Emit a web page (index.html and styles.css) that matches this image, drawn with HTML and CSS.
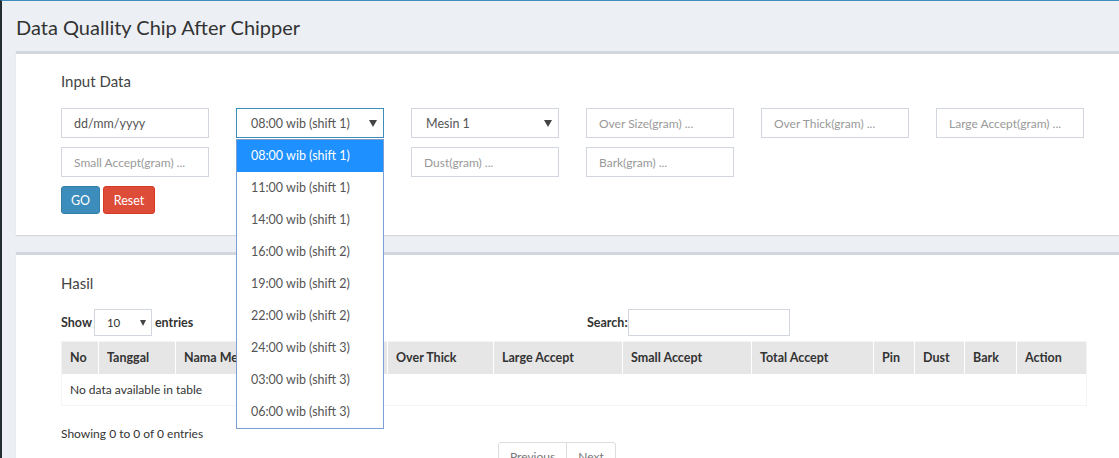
FILE: index.html
```html
<!DOCTYPE html>
<html>
<head>
<meta charset="utf-8">
<link rel="stylesheet" href="styles.css">
</head>
<body>
<div class="wrapper">
  <div class="content-header">
    <h1>Data Quallity Chip After Chipper</h1>
  </div>

  <div class="box box-input">
    <h3 class="box-title">Input Data</h3>
    <div class="form-grid">
      <div class="field"><div class="input text">dd/mm/yyyy</div></div>
      <div class="field dd-anchor">
        <div class="input select focused"><span>08:00 wib (shift 1)</span><span class="arrow"></span></div>
        <ul class="dropdown">
          <li class="active">08:00 wib (shift 1)</li>
          <li>11:00 wib (shift 1)</li>
          <li>14:00 wib (shift 1)</li>
          <li>16:00 wib (shift 2)</li>
          <li>19:00 wib (shift 2)</li>
          <li>22:00 wib (shift 2)</li>
          <li>24:00 wib (shift 3)</li>
          <li>03:00 wib (shift 3)</li>
          <li>06:00 wib (shift 3)</li>
        </ul>
      </div>
      <div class="field"><div class="input select"><span>Mesin 1</span><span class="arrow"></span></div></div>
      <div class="field"><div class="input ph">Over Size(gram) ...</div></div>
      <div class="field"><div class="input ph">Over Thick(gram) ...</div></div>
      <div class="field"><div class="input ph">Large Accept(gram) ...</div></div>
      <div class="field"><div class="input ph">Small Accept(gram) ...</div></div>
      <div class="field"><div class="input ph">Pin(gram) ...</div></div>
      <div class="field"><div class="input ph">Dust(gram) ...</div></div>
      <div class="field"><div class="input ph">Bark(gram) ...</div></div>
    </div>
    <div class="buttons">
      <button class="btn btn-primary">GO</button>
      <button class="btn btn-danger">Reset</button>
    </div>
  </div>

  <div class="box box-result">
    <h3 class="box-title">Hasil</h3>
    <div class="dt-top">
      <div class="dt-length">
        <span class="lbl">Show</span>
        <div class="small-select"><span>10</span><span class="arrow"></span></div>
        <span class="lbl">entries</span>
      </div>
      <div class="dt-search">
        <span class="lbl">Search:</span>
        <div class="search-input"></div>
      </div>
    </div>
    <table class="dt">
      <thead>
        <tr>
          <th class="c-no">No</th>
          <th class="c-tgl">Tanggal</th>
          <th class="c-nama">Nama Mesin</th>
          <th class="c-os">Over Size</th>
          <th class="c-ot">Over Thick</th>
          <th class="c-la">Large Accept</th>
          <th class="c-sa">Small Accept</th>
          <th class="c-ta">Total Accept</th>
          <th class="c-pin">Pin</th>
          <th class="c-dust">Dust</th>
          <th class="c-bark">Bark</th>
          <th class="c-act">Action</th>
        </tr>
      </thead>
      <tbody>
        <tr><td colspan="12">No data available in table</td></tr>
      </tbody>
    </table>
    <div class="dt-info">Showing 0 to 0 of 0 entries</div>
    <div class="pager">
      <span class="pg">Previous</span><span class="pg">Next</span>
    </div>
  </div>
</div>
</body>
</html>
```

FILE: styles.css
```css
* { box-sizing: border-box; }
html, body { margin: 0; padding: 0; }
body {
  background: #ecf0f5;
  font-family: "Lato", "Liberation Sans", sans-serif;
  font-size: 12px;
  color: #333;
  overflow: hidden;
  height: 458px;
}
.wrapper {
  border-left: 2px solid #222d32;
  border-top: 1px solid #3c8dbc;
  min-height: 458px;
}
.content-header { padding: 14px 14px 0 14px; height: 50px; }
.content-header h1 {
  margin: 0;
  font-size: 20px;
  font-weight: 400;
  color: #333;
  line-height: 24px;
}
.box {
  background: #fff;
  border-top: 3px solid #d2d6de;
  margin-left: 14px;
  box-shadow: 0 1px 1px rgba(0,0,0,0.1);
  padding: 0 0 0 45px;
  position: relative;
}
.box-input { height: 184px; padding-top: 17px; }
.box-title {
  margin: 0;
  font-size: 15px;
  font-weight: 400;
  color: #444;
  line-height: 20px;
}
.form-grid {
  margin-top: 17px;
  display: grid;
  grid-template-columns: repeat(6, 148px);
  column-gap: 27px;
  row-gap: 9px;
}
.field { position: relative; }
.input {
  height: 30px;
  border: 1px solid #d2d6de;
  padding: 0 12px;
  display: flex;
  align-items: center;
  font-size: 12.5px;
  color: #555;
  background: #fff;
}
.input.ph { color: #999; font-size: 12px; }
.input.select { justify-content: space-between; padding: 0 6px 0 14px; }
.input.focused { border-color: #3c8dbc; }
.arrow {
  width: 0; height: 0;
  border-left: 4px solid transparent;
  border-right: 4px solid transparent;
  border-top: 7px solid #444;
}
.dropdown {
  position: absolute;
  left: 0; top: 31px;
  width: 148px;
  margin: 0; padding: 0;
  list-style: none;
  background: #fff;
  border: 1px solid #7e9fd4;
  z-index: 10;
}
.dropdown li {
  height: 32px;
  line-height: 32px;
  padding-left: 14px;
  font-size: 12.5px;
  color: #555;
}
.dropdown li.active { background: #1e90ff; color: #fff; }
.buttons { margin-top: 9px; display: flex; gap: 3px; }
.btn {
  height: 28px;
  border: 1px solid;
  border-radius: 3px;
  color: #fff;
  font-family: inherit;
  font-size: 12.5px;
  padding: 0;
  margin: 0;
}
.btn-primary { background: #3c8dbc; border-color: #367fa9; width: 39px; }
.btn-danger { background: #dd4b39; border-color: #d73925; width: 52px; }

.box-result { margin-top: 17px; height: 220px; padding-top: 18px; }
.dt-top {
  margin-top: 16px;
  display: flex;
  width: 1025px;
  align-items: center;
  height: 27px;
}
.dt-length { display: flex; align-items: center; width: 526px; }
.lbl { font-weight: 700; font-size: 12.5px; color: #333; }
.small-select {
  width: 58px; height: 27px;
  border: 1px solid #d2d6de;
  margin: 0 3px 0 2px;
  display: flex; align-items: center; justify-content: space-between;
  padding: 0 5px 0 12px;
  font-size: 11.5px;
  color: #333;
}
.small-select .arrow { border-top-width: 6px; border-left-width: 3px; border-right-width: 3px; }
.dt-search { display: flex; align-items: center; }
.search-input { width: 162px; height: 27px; border: 1px solid #d2d6de; }
table.dt {
  margin-top: 5px;
  width: 1025px;
  border-collapse: collapse;
  table-layout: fixed;
  border: 1px solid #f4f4f4;
}
table.dt th {
  background: #e6e6e6;
  height: 32px;
  text-align: left;
  padding: 0 8px;
  font-size: 12.5px;
  font-weight: 700;
  color: #333;
  border-left: 1px solid #fff;
  white-space: nowrap;
  overflow: hidden;
}
table.dt th:first-child { border-left: none; }
table.dt td { height: 32px; padding: 0 8px; font-size: 12px; color: #333; }
.c-no { width: 37px; }
.c-tgl { width: 77px; }
.c-nama { width: 115px; }
.c-os { width: 97px; }
.c-ot { width: 106px; }
.c-la { width: 129px; }
.c-sa { width: 129px; }
.c-ta { width: 122px; }
.c-pin { width: 41px; }
.c-dust { width: 50px; }
.c-bark { width: 52px; }
.c-act { width: 70px; }
.dt-info { margin-top: 20px; font-size: 12px; color: #333; line-height: 16px; }
.pager { margin-top: 0; margin-left: 438px; display: flex; }
.pg {
  border: 1px solid #ddd;
  padding: 6px 11px;
  color: #777;
  font-size: 12px;
  background: #fff;
  margin-left: -1px;
}
.pg:first-child { border-radius: 3px 0 0 3px; }
.pg:last-child { border-radius: 0 3px 3px 0; }
```
